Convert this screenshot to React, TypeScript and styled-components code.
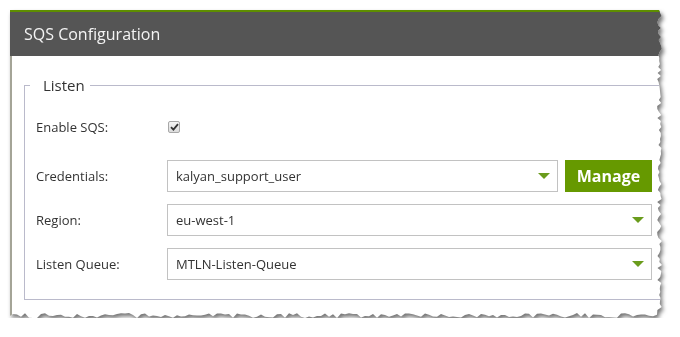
import React from 'react';
import styled, { createGlobalStyle } from 'styled-components';

const GlobalStyle = createGlobalStyle`
  html, body {
    margin: 0;
    padding: 0;
    background: #fff;
  }
  body {
    font-family: "Open Sans", "Liberation Sans", sans-serif;
    color: #333;
  }
`;

// torn paper edge on the right and bottom of the dialog
const W = 652;
const H = 308;
const buildTorn = () => {
  let seed = 11;
  const rnd = () => {
    seed = (seed * 9301 + 49297) % 233280;
    return seed / 233280;
  };
  const pts: string[] = ['0px 0px', `${W - 3}px 0px`];
  for (let y = 3; y < H - 5; y += 3) pts.push(`${(W - 5 + rnd() * 5).toFixed(1)}px ${y}px`);
  for (let x = W - 5; x > 2; x -= 4) pts.push(`${x}px ${(H - 5 + rnd() * 5).toFixed(1)}px`);
  pts.push(`0px ${H - 2}px`);
  return `polygon(${pts.join(', ')})`;
};
const TORN = buildTorn();

const Page = styled.div`
  padding: 10px 0 0 10px;
`;

const Shadow = styled.div`
  width: ${W}px;
  filter: drop-shadow(2px 3px 2px rgba(0, 0, 0, 0.55));
`;

const Panel = styled.div`
  width: ${W}px;
  height: ${H}px;
  background: #fff;
  overflow: hidden;
  clip-path: ${TORN};
  display: flex;
  flex-direction: column;
`;

const Header = styled.div`
  height: 44px;
  border-top: 2px solid #5e8e00;
  background: #555555;
  color: #f4f4f4;
  font-size: 16px;
  display: flex;
  align-items: center;
  padding-left: 14px;
`;

const Body = styled.div`
  flex: 1;
  border-left: 2px solid #a4a497;
  padding: 19px 0 0 12px;
`;

const Fieldset = styled.fieldset`
  margin: 0 -40px 0 0;
  padding: 20px 0 19px 11px;
  border: 1px solid #babacb;
  border-right: none;
`;

const Legend = styled.legend`
  margin-left: -6px;
  padding: 0 5px 0 13px;
  font-size: 15px;
  line-height: 20px;
  color: #333;
`;

const Form = styled.div`
  width: 616px;
  display: flex;
  flex-direction: column;
  gap: 12px;
`;

const Row = styled.div<{ $h?: number; $after?: number }>`
  display: flex;
  align-items: center;
  height: ${(p) => p.$h ?? 32}px;
  margin-bottom: ${(p) => p.$after ?? 0}px;
`;

const Label = styled.div`
  width: 131px;
  flex: none;
  font-size: 13px;
  color: #333;
`;

const Check = styled.span`
  width: 10px;
  height: 10px;
  margin-left: 1px;
  border: 1px solid #a8a8a8;
  border-radius: 2px;
  background: linear-gradient(#f4f4f4, #dcdcdc);
  display: flex;
  align-items: center;
  justify-content: center;
`;

const Select = styled.div`
  flex: 1;
  height: 30px;
  border: 1px solid #c2c2c2;
  background: #fff;
  display: flex;
  align-items: center;
  justify-content: space-between;
  padding: 0 7px 0 8px;
  font-size: 13px;
  color: #333;
`;

const Arrow = styled.span`
  width: 0;
  height: 0;
  border-left: 6px solid transparent;
  border-right: 6px solid transparent;
  border-top: 6px solid #6a9c1c;
`;

const Button = styled.button`
  margin-left: 7px;
  width: 87px;
  height: 32px;
  border: none;
  background: #669900;
  color: #fff;
  font-family: "Open Sans", "Liberation Sans", sans-serif;
  font-weight: 700;
  font-size: 16px;
  padding: 0;
`;

const Dropdown: React.FC<{ value: string }> = ({ value }) => (
  <Select>
    <span>{value}</span>
    <Arrow />
  </Select>
);

const App: React.FC = () => {
  return (
    <Page>
      <GlobalStyle />
      <Shadow>
        <Panel>
          <Header>SQS Configuration</Header>
          <Body>
            <Fieldset>
              <Legend>Listen</Legend>
              <Form>
                <Row $h={24} $after={9}>
                  <Label>Enable SQS:</Label>
                  <Check>
                    <svg width="9" height="8" viewBox="0 0 9 8">
                      <path d="M1 4.2 L3.4 6.6 L8 1.2" fill="none" stroke="#333" strokeWidth="1.8" />
                    </svg>
                  </Check>
                </Row>
                <Row>
                  <Label>Credentials:</Label>
                  <Dropdown value="kalyan_support_user" />
                  <Button>Manage</Button>
                </Row>
                <Row>
                  <Label>Region:</Label>
                  <Dropdown value="eu-west-1" />
                </Row>
                <Row>
                  <Label>Listen Queue:</Label>
                  <Dropdown value="MTLN-Listen-Queue" />
                </Row>
              </Form>
            </Fieldset>
          </Body>
        </Panel>
      </Shadow>
    </Page>
  );
};

export default App;
